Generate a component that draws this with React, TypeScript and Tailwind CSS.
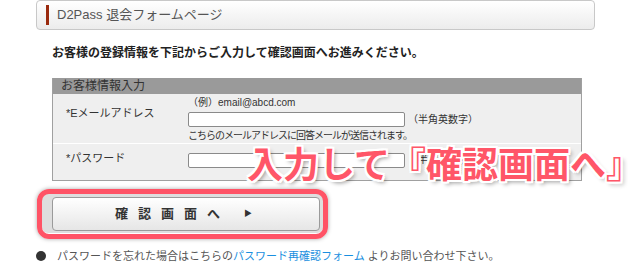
export default function App() {
	const jp = "font-['Liberation_Sans','Noto_Sans_CJK_JP',sans-serif]"
	return (
		<div className={`relative w-[632px] h-[266px] overflow-hidden bg-white text-[#333] ${jp}`}>
			{/* page title bar */}
			<div className="ml-[36px] w-[559px] h-[30px] flex items-center border border-[#c8c8c8] rounded-[4px] bg-gradient-to-b from-white to-[#ececec]">
				<div className="ml-[9px] w-[3px] h-[20px] bg-[#9a2a0e]" />
				<p className="ml-[8px] text-[13px] leading-[16px] text-[#555]">D2Pass 退会フォームページ</p>
			</div>

			<p className="mt-[15px] pl-[52px] text-[12px] leading-[16px] font-bold text-[#222]">お客様の登録情報を下記からご入力して確認画面へお進みください。</p>

			{/* form table */}
			<div className="mt-[17px] ml-[52px] w-[530px] border-x border-b border-[#a0a0a0] bg-[#efefef]">
				<div className="h-[16px] bg-[#9a9a9a] pl-[8px] text-[12px] leading-[16px] text-[#333]">お客様情報入力</div>
				<div className="flex h-[50px] border-b border-white">
					<div className="w-[135px] pl-[13px] pt-[12px] text-[11px] leading-[14px]">*Eメールアドレス</div>
					<div className="pt-[3px]">
						<p className="h-[12px] text-[10px] leading-[12px]">（例）email@abcd.com</p>
						<div className="mt-[3px] flex items-center">
							<div className="w-[217px] h-[15px] bg-white border border-[#8a8a8a] rounded-[2px]" />
							<span className="ml-[3px] text-[10px] leading-[12px]">（半角英数字）</span>
						</div>
						<p className="mt-[2px] h-[14px] text-[10px] leading-[14px] tracking-[-1px]">こちらのメールアドレスに回答メールが送信されます。</p>
					</div>
				</div>
				<div className="flex h-[36px]">
					<div className="w-[135px] pl-[13px] pt-[7px] text-[11px] leading-[14px]">*パスワード</div>
					<div className="pt-[9px] flex items-start">
						<div className="w-[217px] h-[15px] bg-white border border-[#8a8a8a] rounded-[2px]" />
						<span className="ml-[3px] text-[10px] leading-[14px]">（半角英数字）</span>
					</div>
				</div>
			</div>

			{/* submit button */}
			<div className="mt-[12px] ml-[42px] w-[281px] h-[40px] pl-[10px] pr-[3px] pt-[4px] pb-[2px] rounded-[6px] bg-[#dedede]">
				<button className="w-full h-full flex items-center border border-[#9a9a9a] rounded-[4px] bg-gradient-to-b from-white to-[#e6e6e6]">
					<span className="ml-[62px] text-[13px] font-bold tracking-[10px] text-[#333]">確認画面へ</span>
					<span className="ml-[14px] text-[8px] text-[#333]">▶</span>
				</button>
			</div>

			<div className="mt-[16px] flex items-center h-[14px]">
				<div className="ml-[36px] w-[10px] h-[10px] rounded-full bg-[#333]" />
				<p className="ml-[11px] text-[11px] leading-[14px] text-[#555]">
					パスワードを忘れた場合はこちらの<span className="text-[#1a8fe0]">パスワード再確認フォーム</span> よりお問い合わせ下さい。
				</p>
			</div>

			{/* annotation overlay */}
			<div className="absolute left-[37px] top-[189px] w-[291px] h-[50px] rounded-[12px] border-[5px] border-[#ff5366] shadow-[0_0_4px_rgba(0,0,0,0.35)]" />
			<p className="absolute left-[247px] top-[144px] text-[36px] leading-[44px] font-bold text-[#ff5668] [text-shadow:2px_0_0_#fff,-2px_0_0_#fff,0_2px_0_#fff,0_-2px_0_#fff,2px_2px_0_#fff,-2px_-2px_0_#fff,2px_-2px_0_#fff,-2px_2px_0_#fff,3px_3px_4px_rgba(0,0,0,0.4)]">入力して『確認画面へ』</p>
		</div>
	)
}
